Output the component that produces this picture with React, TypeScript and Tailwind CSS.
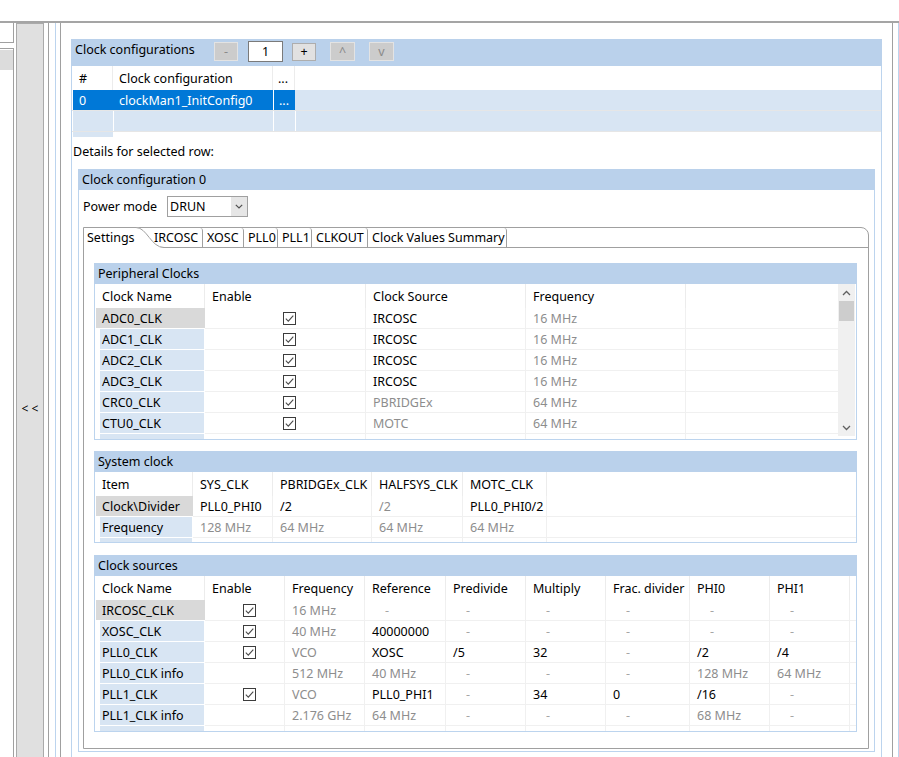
import React from "react";

type K = "k" | "g" | "d" | "x" | "e";
type CellT = [K, string];
type Col = { w: string; t: string; last?: boolean };
type RowT = { n: string; sel?: boolean; c: CellT[] };

function Chk() {
  return (
    <svg width="13" height="13" viewBox="0 0 13 13" className="block">
      <rect x="0.5" y="0.5" width="12" height="12" fill="#fff" stroke="#3c3c3c" />
      <path d="M2.8 6.6 L5.3 9.1 L10.3 3.6" fill="none" stroke="#4a4a4a" strokeWidth="1.1" />
    </svg>
  );
}

function DCell({ w, cell, last }: { w: string; cell: CellT; last?: boolean }) {
  const [k, t] = cell;
  return (
    <div
      className={`${w} shrink-0 h-[21px] flex items-center whitespace-nowrap overflow-hidden border-b border-[#f0f0f0] ${
        last ? "" : "border-r"
      }`}
    >
      {k === "x" && (
        <div className="w-full flex justify-center pl-[9px]">
          <Chk />
        </div>
      )}
      {k === "k" && <span className="pl-[7px] pt-[1px] text-black">{t}</span>}
      {k === "g" && <span className="pl-[7px] pt-[1px] text-[#8d8d8d]">{t}</span>}
      {k === "d" && <span className="pl-[20px] pt-[1px] text-[#a6a6a6]">-</span>}
    </div>
  );
}

function NCell({ w, name, sel }: { w: string; name: string; sel?: boolean }) {
  return sel ? (
    <div className={`${w} shrink-0 h-[21px] pl-[1px]`}>
      <div className="h-[20px] bg-[#d9d9d9] pl-[6px] pt-[1px] flex items-center whitespace-nowrap">{name}</div>
    </div>
  ) : (
    <div className={`${w} shrink-0 h-[21px] pl-[5px] pr-[1px]`}>
      <div className="h-[20px] bg-[#d8e5f3] pl-[2px] pt-[1px] flex items-center whitespace-nowrap">{name}</div>
    </div>
  );
}

function HCell({ w, t, last }: Col) {
  return (
    <div
      className={`${w} shrink-0 h-[24px] flex items-center pl-[7px] pt-[1px] whitespace-nowrap border-[#ececec] ${
        last ? "" : "border-r"
      }`}
    >
      {t}
    </div>
  );
}

function VScroll() {
  return (
    <div className="w-[17px] h-[152px] mr-[1px] bg-[#f0f0f0] flex flex-col items-center shrink-0">
      <div className="h-[17px] w-full flex items-center justify-center">
        <svg width="9" height="6" viewBox="0 0 9 6">
          <path d="M1 5 L4.5 1.5 L8 5" fill="none" stroke="#606060" strokeWidth="1.3" />
        </svg>
      </div>
      <div className="w-[15px] h-[20px] bg-[#cdcdcd]" />
      <div className="flex-1" />
      <div className="h-[17px] w-full flex items-center justify-center">
        <svg width="9" height="6" viewBox="0 0 9 6">
          <path d="M1 1 L4.5 4.5 L8 1" fill="none" stroke="#606060" strokeWidth="1.3" />
        </svg>
      </div>
    </div>
  );
}

function Table({
  title,
  cols,
  rows,
  bodyH,
  scroll,
}: {
  title: string;
  cols: Col[];
  rows: RowT[];
  bodyH: string;
  scroll?: boolean;
}) {
  return (
    <div className="w-[763px] shrink-0">
      <div className="h-[21px] bg-[#bad1eb] pl-[4px] pt-[1px] flex items-center">{title}</div>
      <div className="border-x border-b border-[#bcd4ee] flex items-start">
        <div className="flex-1 min-w-0">
          <div className="flex">
            {cols.map((c, i) => (
              <HCell key={i} w={c.w} t={c.t} last={c.last} />
            ))}
          </div>
          <div className={`${bodyH} overflow-hidden`}>
            {rows.map((r, ri) => (
              <div className="flex" key={ri}>
                <NCell w={cols[0].w} name={r.n} sel={r.sel} />
                {r.c.map((c, i) => (
                  <DCell key={i} w={cols[i + 1].w} cell={c} last={cols[i + 1].last} />
                ))}
              </div>
            ))}
          </div>
        </div>
        {scroll && <VScroll />}
      </div>
    </div>
  );
}

const pCols: Col[] = [
  { w: "w-[110px]", t: "Clock Name" },
  { w: "w-[161px]", t: "Enable" },
  { w: "w-[160px]", t: "Clock Source" },
  { w: "w-[160px]", t: "Frequency" },
  { w: "w-[152px]", t: "", last: true },
];

const pRows: RowT[] = [
  { n: "ADC0_CLK", sel: true, c: [["x", ""], ["k", "IRCOSC"], ["g", "16 MHz"], ["e", ""]] },
  { n: "ADC1_CLK", c: [["x", ""], ["k", "IRCOSC"], ["g", "16 MHz"], ["e", ""]] },
  { n: "ADC2_CLK", c: [["x", ""], ["k", "IRCOSC"], ["g", "16 MHz"], ["e", ""]] },
  { n: "ADC3_CLK", c: [["x", ""], ["k", "IRCOSC"], ["g", "16 MHz"], ["e", ""]] },
  { n: "CRC0_CLK", c: [["x", ""], ["g", "PBRIDGEx"], ["g", "64 MHz"], ["e", ""]] },
  { n: "CTU0_CLK", c: [["x", ""], ["g", "MOTC"], ["g", "64 MHz"], ["e", ""]] },
  { n: "", c: [["e", ""], ["e", ""], ["e", ""], ["e", ""]] },
];

const sCols: Col[] = [
  { w: "w-[98px]", t: "Item" },
  { w: "w-[80px]", t: "SYS_CLK" },
  { w: "w-[99px]", t: "PBRIDGEx_CLK" },
  { w: "w-[91px]", t: "HALFSYS_CLK" },
  { w: "w-[84px]", t: "MOTC_CLK" },
  { w: "w-[309px]", t: "", last: true },
];

const sRows: RowT[] = [
  {
    n: "Clock\\Divider",
    sel: true,
    c: [["k", "PLL0_PHI0"], ["k", "/2"], ["g", "/2"], ["k", "PLL0_PHI0/2"], ["e", ""]],
  },
  {
    n: "Frequency",
    c: [["g", "128 MHz"], ["g", "64 MHz"], ["g", "64 MHz"], ["g", "64 MHz"], ["e", ""]],
  },
  { n: "", c: [["e", ""], ["e", ""], ["e", ""], ["e", ""], ["e", ""]] },
];

const cCols: Col[] = [
  { w: "w-[110px]", t: "Clock Name" },
  { w: "w-[80px]", t: "Enable" },
  { w: "w-[80px]", t: "Frequency" },
  { w: "w-[81px]", t: "Reference" },
  { w: "w-[80px]", t: "Predivide" },
  { w: "w-[80px]", t: "Multiply" },
  { w: "w-[84px]", t: "Frac. divider" },
  { w: "w-[80px]", t: "PHI0" },
  { w: "w-[80px]", t: "PHI1" },
  { w: "w-[6px]", t: "", last: true },
];

const cRows: RowT[] = [
  {
    n: "IRCOSC_CLK",
    sel: true,
    c: [["x", ""], ["g", "16 MHz"], ["d", ""], ["d", ""], ["d", ""], ["d", ""], ["d", ""], ["d", ""], ["e", ""]],
  },
  {
    n: "XOSC_CLK",
    c: [["x", ""], ["g", "40 MHz"], ["k", "40000000"], ["d", ""], ["d", ""], ["d", ""], ["d", ""], ["d", ""], ["e", ""]],
  },
  {
    n: "PLL0_CLK",
    c: [["x", ""], ["g", "VCO"], ["k", "XOSC"], ["k", "/5"], ["k", "32"], ["d", ""], ["k", "/2"], ["k", "/4"], ["e", ""]],
  },
  {
    n: "PLL0_CLK info",
    c: [["e", ""], ["g", "512 MHz"], ["g", "40 MHz"], ["d", ""], ["d", ""], ["d", ""], ["g", "128 MHz"], ["g", "64 MHz"], ["e", ""]],
  },
  {
    n: "PLL1_CLK",
    c: [["x", ""], ["g", "VCO"], ["k", "PLL0_PHI1"], ["d", ""], ["k", "34"], ["k", "0"], ["k", "/16"], ["d", ""], ["e", ""]],
  },
  {
    n: "PLL1_CLK info",
    c: [["e", ""], ["g", "2.176 GHz"], ["g", "64 MHz"], ["d", ""], ["d", ""], ["d", ""], ["g", "68 MHz"], ["d", ""], ["e", ""]],
  },
  {
    n: "",
    c: [["e", ""], ["e", ""], ["e", ""], ["e", ""], ["e", ""], ["e", ""], ["e", ""], ["e", ""], ["e", ""]],
  },
];

function Tabs() {
  return (
    <div className="flex h-[20px] relative">
      <div className="w-[53px] h-[20px] bg-white pl-[3px] flex items-center whitespace-nowrap">Settings</div>
      <svg className="absolute left-[52px] top-[-1px]" width="28" height="21" viewBox="0 0 28 21">
        <path d="M0 0 L1 0.5 C11 0.5 15 20.5 27 20.5 L27 21 L0 21 Z" fill="#fff" />
        <path d="M0 0.5 C11 0.5 15 20.5 28 20.5" fill="none" stroke="#a0a0a0" strokeWidth="1" />
      </svg>
      <div className="w-[66px] h-[20px] border-b border-r border-[#a0a0a0] rounded-tr-[3px] pl-[17px] flex items-center whitespace-nowrap">
        IRCOSC
      </div>
      <div className="w-[41px] h-[20px] border-b border-r border-[#a0a0a0] rounded-tr-[3px] pl-[4px] flex items-center whitespace-nowrap">
        XOSC
      </div>
      <div className="w-[34px] h-[20px] border-b border-r border-[#a0a0a0] rounded-tr-[3px] pl-[4px] flex items-center whitespace-nowrap">
        PLL0
      </div>
      <div className="w-[34px] h-[20px] border-b border-r border-[#a0a0a0] rounded-tr-[3px] pl-[4px] flex items-center whitespace-nowrap">
        PLL1
      </div>
      <div className="w-[56px] h-[20px] border-b border-r border-[#a0a0a0] rounded-tr-[3px] pl-[4px] flex items-center whitespace-nowrap">
        CLKOUT
      </div>
      <div className="w-[139px] h-[20px] border-b border-r border-[#a0a0a0] rounded-tr-[3px] pl-[4px] flex items-center whitespace-nowrap">
        Clock Values Summary
      </div>
      <div className="flex-1 h-[20px] border-b border-[#a0a0a0]" />
    </div>
  );
}

export default function App() {
  return (
    <div className="w-[899px] h-[757px] overflow-hidden bg-white text-[12.5px] leading-[16px] text-black font-['Noto_Sans',sans-serif] flex flex-col">
      <div className="h-[21px] shrink-0" />
      <div className="h-[2px] shrink-0 bg-[#a5a5a5]" />
      <div className="flex flex-1 min-h-0">
        {/* left panel */}
        <div className="w-[14px] shrink-0 flex flex-col">
          <div className="h-[20px] shrink-0 border-r border-b border-[#a0a0a0]" />
          <div className="h-[5px] shrink-0" />
          <div className="flex-1 border-t border-r border-[#a0a0a0] pt-[1px]">
            <div className="h-[20px] bg-[#dcdcdc]" />
          </div>
        </div>
        <div className="w-[2px] shrink-0" />
        {/* splitter */}
        <div className="w-[28px] shrink-0 border-x border-t border-[#aaaaaa] bg-[#e0e0e0] pt-[377px] flex justify-center text-[12px]">
          &lt; &lt;
        </div>
        <div className="w-[4px] shrink-0" />
        <div className="w-[1px] shrink-0 bg-[#a0a0a0]" />
        <div className="w-[6px] shrink-0" />
        <div className="w-[1px] shrink-0 bg-[#bcd4ee]" />
        <div className="w-[4px] shrink-0" />
        <div className="w-[1px] shrink-0 bg-[#a0a0a0]" />

        {/* content */}
        <div className="w-[831px] shrink-0 px-[10px] pt-[16px] flex flex-col min-h-0">
          <div className="flex flex-col flex-1 min-h-0">
            {/* section header */}
            <div className="h-[27px] shrink-0 bg-[#bad1eb] flex items-start pl-[4px]">
              <div className="w-[139px] pt-[3px] whitespace-nowrap">Clock configurations</div>
              <div className="w-[24px] h-[19px] mt-[3px] bg-[#cccccc] border border-[#e3e3e3] flex items-center justify-center text-[#8a8a8a]">
                -
              </div>
              <div className="w-[35px] h-[21px] mt-[2px] ml-[10px] bg-white border border-[#7a7a7a] flex items-center justify-center">
                1
              </div>
              <div className="w-[24px] h-[18px] mt-[4px] ml-[9px] bg-[#e1e1e1] border border-[#adadad] flex items-center justify-center">
                +
              </div>
              <div className="w-[25px] h-[19px] mt-[3px] ml-[14px] bg-[#cccccc] border border-[#e3e3e3] flex items-center justify-center text-[#8a8a8a]">
                ^
              </div>
              <div className="w-[25px] h-[19px] mt-[3px] ml-[14px] bg-[#cccccc] border border-[#e3e3e3] flex items-center justify-center text-[#8a8a8a]">
                v
              </div>
            </div>

            {/* section body */}
            <div className="flex-1 min-h-0 border-x border-[#bcd4ee] flex flex-col">
              {/* config table header */}
              <div className="flex h-[24px] shrink-0">
                <div className="w-[41px] border-r border-[#ececec] pl-[7px] pt-[1px] flex items-center">#</div>
                <div className="w-[160px] border-r border-[#ececec] pl-[6px] pt-[1px] flex items-center whitespace-nowrap">
                  Clock configuration
                </div>
                <div className="w-[22px] border-r border-[#ececec] pl-[5px] pt-[1px] flex items-center">...</div>
              </div>
              {/* row 0 selected */}
              <div className="h-[20px] ml-[1px] flex shrink-0 text-white">
                <div className="w-[200px] bg-[#0078d7] flex items-center pt-[1px]">
                  <span className="w-[40px] pl-[6px]">0</span>
                  <span className="pl-[6px] whitespace-nowrap">clockMan1_InitConfig0</span>
                </div>
                <div className="w-[1px] bg-white" />
                <div className="w-[21px] bg-[#0078d7] flex items-center pl-[5px] pt-[1px]">...</div>
                <div className="flex-1 bg-[#d8e5f3]" />
              </div>
              <div className="h-[1px] shrink-0 bg-[#e6e6e6]" />
              {/* row 1 */}
              <div className="h-[20px] ml-[1px] flex shrink-0">
                <div className="w-[40px] bg-[#d8e5f3]" />
                <div className="w-[1px] bg-white" />
                <div className="w-[159px] bg-[#d8e5f3]" />
                <div className="w-[1px] bg-white" />
                <div className="w-[21px] bg-[#d8e5f3]" />
                <div className="w-[1px] bg-white" />
                <div className="flex-1 bg-[#d8e5f3]" />
              </div>
              <div className="h-[1px] shrink-0 bg-[#e6e6e6]" />
              <div className="h-[5px] shrink-0 ml-[1px] w-[40px] bg-[#d8e5f3]" />

              <div className="mt-[6px] pt-[1px] h-[16px] shrink-0 pl-[1px] whitespace-nowrap">Details for selected row:</div>

              {/* details box */}
              <div className="mx-[6px] mt-[10px] mb-[2px] flex flex-col shrink-0">
                <div className="h-[21px] bg-[#bad1eb] pl-[4px] pt-[1px] flex items-center">Clock configuration 0</div>
                <div className="border-x border-b border-[#bcd4ee] px-[4px] pb-[2px]">
                  {/* power mode */}
                  <div className="mt-[6px] h-[21px] flex items-center">
                    <div className="w-[84px] pt-[1px] whitespace-nowrap">Power mode</div>
                    <div className="w-[81px] h-[21px] border border-[#a0a0a0] bg-white flex items-center">
                      <span className="flex-1 pl-[2px] pt-[1px]">DRUN</span>
                      <div className="w-[16px] h-[19px] bg-[#e6e6e6] flex items-center justify-center">
                        <svg width="8" height="5" viewBox="0 0 8 5">
                          <path d="M0.8 0.8 L4 4 L7.2 0.8" fill="none" stroke="#505050" strokeWidth="1.2" />
                        </svg>
                      </div>
                    </div>
                  </div>

                  {/* tab folder */}
                  <div className="mt-[10px] w-[786px] border border-[#a0a0a0] rounded-tr-[8px]">
                    <Tabs />
                    <div className="pl-[10px] pt-[15px] pb-[16px] flex flex-col">
                      <Table title="Peripheral Clocks" cols={pCols} rows={pRows} bodyH="h-[131px]" scroll />
                      <div className="h-[11px]" />
                      <Table title="System clock" cols={sCols} rows={sRows} bodyH="h-[46px]" />
                      <div className="h-[12px]" />
                      <Table title="Clock sources" cols={cCols} rows={cRows} bodyH="h-[131px]" />
                    </div>
                  </div>
                </div>
              </div>
            </div>
          </div>
        </div>

        <div className="w-[1px] shrink-0 bg-[#a0a0a0]" />
        <div className="w-[5px] shrink-0" />
        <div className="w-[1px] shrink-0 bg-[#bcd4ee]" />
      </div>
    </div>
  );
}
